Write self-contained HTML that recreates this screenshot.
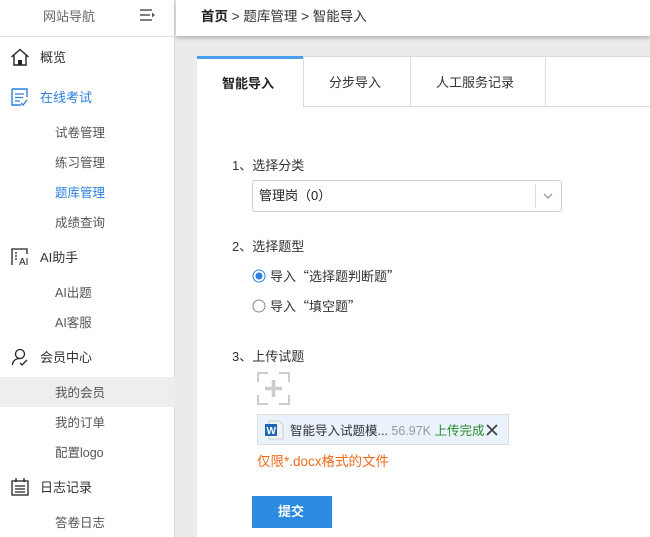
<!DOCTYPE html>
<html><head><meta charset="utf-8"><style>
*{margin:0;padding:0;box-sizing:border-box}
body{width:650px;height:537px;overflow:hidden;background:#ebebeb;font-family:"Liberation Sans","Noto Sans CJK SC",sans-serif;font-size:13px;color:#333;position:relative}
.a{position:absolute}
#side{left:0;top:0;width:175px;height:537px;background:#fff;border-right:1px solid #ddd}
#top{left:176px;top:0;width:474px;height:36px;background:#fff;box-shadow:0 2px 4px rgba(0,0,0,.25)}
.t{position:absolute;white-space:nowrap;line-height:18px}
.sub{left:55px;color:#555;font-size:12.5px}
.main{left:40px;color:#333}
.q{font-family:"Noto Sans CJK SC",sans-serif}
</style></head><body>
<div class="a" id="side">
 <div class="t" style="left:43px;top:8px;color:#666">网站导航</div>
 <svg class="a" style="left:139px;top:8px" width="18" height="14"><path d="M1 2h12M1 7h10M1 12h12" stroke="#555" stroke-width="1.6"/><path d="M13 4.5l3 2.5-3 2.5z" fill="#555"/></svg>
 <div class="a" style="left:0;top:36px;width:175px;height:1px;background:#ddd"></div>
 <svg class="a" style="left:10px;top:48px" width="20" height="18"><path d="M1.5 9L10 1.5 18.5 9M4 7.5V17h12V7.5" fill="none" stroke="#222" stroke-width="1.4"/><rect x="8" y="12" width="4" height="5" fill="#222"/></svg>
 <div class="t main" style="top:49px">概览</div>
 <svg class="a" style="left:11px;top:88px" width="18" height="18"><path d="M1 1h15v8M1 1v16h9" fill="none" stroke="#2b7fe0" stroke-width="1.4"/><path d="M4 6h9M4 9.5h8M4 13h5M10 15l2 2 4-5" fill="none" stroke="#2b7fe0" stroke-width="1.3"/></svg>
 <div class="t main" style="top:89px;color:#2b7fe0">在线考试</div>
 <div class="t sub" style="top:124px">试卷管理</div>
 <div class="t sub" style="top:154px">练习管理</div>
 <div class="t sub" style="top:184px;color:#2b7fe0">题库管理</div>
 <div class="t sub" style="top:214px">成绩查询</div>
 <svg class="a" style="left:11px;top:248px" width="18" height="18"><path d="M1 17V1h15v5" fill="none" stroke="#222" stroke-width="1.3"/><path d="M4 5h2M4 8h2M4 11h2" stroke="#222" stroke-width="1.3"/><text x="8" y="17" font-size="10" font-family="Liberation Sans" fill="#222">AI</text></svg>
 <div class="t main" style="top:249px">AI助手</div>
 <div class="t sub" style="top:284px">AI出题</div>
 <div class="t sub" style="top:314px">AI客服</div>
 <svg class="a" style="left:11px;top:348px" width="18" height="18"><circle cx="9" cy="6" r="4.5" fill="none" stroke="#222" stroke-width="1.3"/><path d="M1.5 17c0-4 3-6.5 7.5-6.5M9 15l2 2 5-5" fill="none" stroke="#222" stroke-width="1.3"/></svg>
 <div class="t main" style="top:349px">会员中心</div>
 <div class="a" style="left:0;top:377px;width:175px;height:30px;background:#eee"></div>
 <div class="t sub" style="top:384px">我的会员</div>
 <div class="t sub" style="top:414px">我的订单</div>
 <div class="t sub" style="top:444px">配置logo</div>
 <svg class="a" style="left:11px;top:478px" width="18" height="18"><rect x="1" y="3" width="16" height="14" fill="none" stroke="#222" stroke-width="1.3"/><path d="M5 0v4M13 0v4M4 8h10M4 11h10M4 14h10" stroke="#222" stroke-width="1.3"/></svg>
 <div class="t main" style="top:479px">日志记录</div>
 <div class="t sub" style="top:514px">答卷日志</div>
</div>
<div class="a" id="top">
 <div class="t" style="left:25px;top:8px;font-size:13.5px"><b style="color:#222">首页</b> &gt; 题库管理 &gt; 智能导入</div>
</div>
<div class="a" style="left:197px;top:56px;width:453px;height:481px;background:#fff"></div>
<div class="a" style="left:197px;top:56px;width:106px;height:3px;background:#4a9ff0"></div>
<div class="a" style="left:303px;top:106px;width:347px;height:1px;background:#ddd"></div>
<div class="a" style="left:303px;top:57px;width:1px;height:49px;background:#ddd"></div>
<div class="a" style="left:410px;top:57px;width:1px;height:49px;background:#ddd"></div>
<div class="a" style="left:545px;top:57px;width:1px;height:49px;background:#ddd"></div>
<div class="a" style="left:303px;top:56px;width:347px;height:1px;background:#ddd"></div>
<div class="t" style="left:222px;top:75px;font-weight:bold;color:#222">智能导入</div>
<div class="t" style="left:329px;top:74px">分步导入</div>
<div class="t" style="left:436px;top:74px">人工服务记录</div>
<div class="t" style="left:232px;top:157px">1、选择分类</div>
<div class="a" style="left:252px;top:180px;width:310px;height:32px;border:1px solid #ccc;border-radius:3px"></div>
<div class="t" style="left:259px;top:187px;color:#222">管理岗（0）</div>
<div class="a" style="left:535px;top:184px;width:1px;height:24px;background:#ddd"></div>
<svg class="a" style="left:543px;top:193px" width="10" height="7"><path d="M1 1l4 4 4-4" fill="none" stroke="#999" stroke-width="1.3"/></svg>
<div class="t" style="left:232px;top:238px">2、选择题型</div>
<svg class="a" style="left:252px;top:269px" width="14" height="14"><circle cx="7" cy="7" r="6" fill="#fff" stroke="#2b7fe0" stroke-width="1"/><circle cx="7" cy="7" r="3.5" fill="#2b7fe0"/></svg>
<div class="t" style="left:270px;top:267px">导入<span class="q">“</span>选择题判断题<span class="q">”</span></div>
<svg class="a" style="left:252px;top:299px" width="14" height="14"><circle cx="7" cy="7" r="6" fill="#fff" stroke="#888" stroke-width="1"/></svg>
<div class="t" style="left:270px;top:297px">导入<span class="q">“</span>填空题<span class="q">”</span></div>
<div class="t" style="left:232px;top:348px">3、上传试题</div>
<svg class="a" style="left:257px;top:372px" width="33" height="33"><path d="M1 10V1h10M22 1h10v9M32 23v9H22M11 32H1V23" fill="none" stroke="#ccc" stroke-width="2"/><path d="M16.5 8v17M8 16.5h17" stroke="#ccc" stroke-width="3.5"/></svg>
<div class="a" style="left:257px;top:414px;width:252px;height:31px;background:#eaf3fc;border:1px solid #ddd"></div>
<svg class="a" style="left:264px;top:420px" width="20" height="20"><path d="M5 1h10l4 4v14H5z" fill="#f3f3f3" stroke="#ccc"/><rect x="1" y="4" width="12" height="12" fill="#1f66b3"/><text x="2.5" y="14" font-size="10" font-weight="bold" font-family="Liberation Sans" fill="#fff">W</text></svg>
<div class="t" style="left:290px;top:422px;font-size:12.5px;color:#333">智能导入试题模... <span style="color:#999">56.97K</span> <span style="color:#2a8a2a">上传完成</span></div>
<svg class="a" style="left:486px;top:424px" width="12" height="12"><path d="M1 1l10 10M11 1L1 11" stroke="#444" stroke-width="1.8"/></svg>
<div class="t" style="left:257px;top:453px;color:#f06a1d;font-size:13.5px">仅限*.docx格式的文件</div>
<div class="a" style="left:252px;top:496px;width:80px;height:32px;background:#2b8be0"></div>
<div class="t" style="left:278px;top:503px;color:#fff;font-weight:bold">提交</div>
</body></html>
